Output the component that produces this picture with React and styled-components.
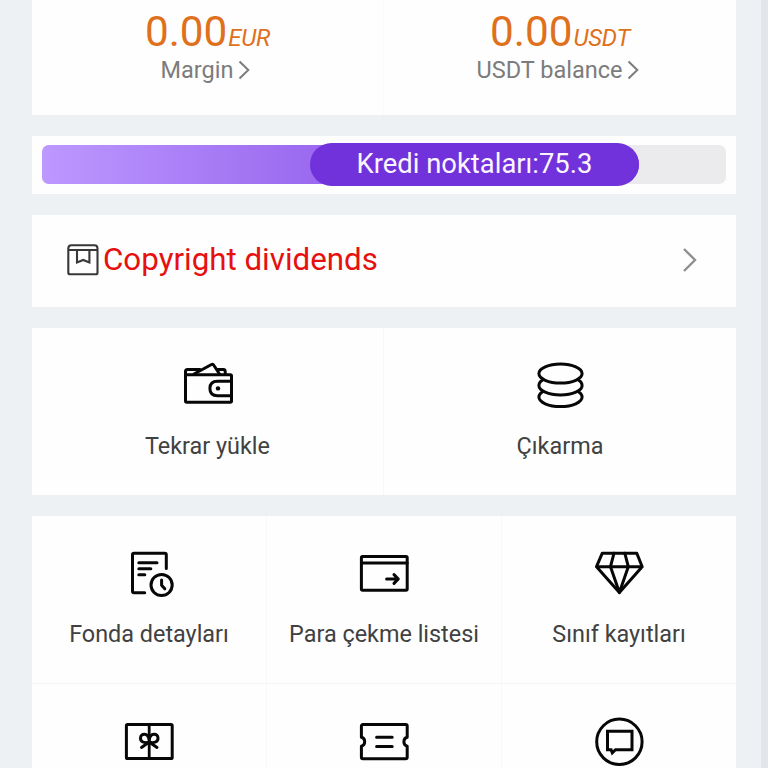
import React from "react";
import styled, { createGlobalStyle } from "styled-components";

const GlobalStyle = createGlobalStyle`
  *, *::before, *::after { box-sizing: border-box; }
  body {
    margin: 0;
    overflow: hidden;
    background: #edf1f4;
    font-family: Roboto, "Liberation Sans", sans-serif;
  }
`;

const Page = styled.main`
  display: flex;
  flex-direction: column;
  gap: 21px;
  height: 768px;
  padding: 0 25px 0 32px;
  overflow: hidden;
  background: #edf1f4;
  border-right: 7px solid #e3e5ea;
`;

const Card = styled.section`
  flex: none;
  background: #fefefe;
`;

const Balances = styled(Card)`
  display: grid;
  grid-template-columns: 351px 353px;
  height: 115px;
`;

const Balance = styled.div`
  display: flex;
  flex-direction: column;
  align-items: center;
  padding-top: 7px;
  & + & { border-left: 1px solid #fafafb; }
`;

const Amount = styled.div`
  height: 49px;
  line-height: 50px;
  font-size: 42.3px;
  color: #df701c;
  white-space: nowrap;
`;

const Currency = styled.em`
  margin-left: 1px;
  font-size: 24px;
  letter-spacing: -0.3px;
`;

const BalanceLink = styled.a`
  display: flex;
  align-items: center;
  gap: 5px;
  height: 28px;
  padding-right: 4px;
  font-size: 23.5px;
  line-height: 28px;
  color: #7c7c7c;
  white-space: nowrap;
`;

const CreditCard = styled(Card)`
  height: 58px;
  padding: 9px 10px 10px;
`;

const Track = styled.div`
  display: flex;
  align-items: center;
  height: 39px;
  border-radius: 7px;
  background: #ebebed;
`;

const Fill = styled.div`
  display: flex;
  align-items: center;
  justify-content: flex-end;
  width: 597px;
  height: 39px;
  border-radius: 7px 20px 20px 7px;
  background: linear-gradient(90deg, #bd98ff, #7232dd);
`;

const Pill = styled.div`
  flex: none;
  width: 329px;
  height: 43px;
  border-radius: 22px;
  background: #7132dc;
  color: #fbf5ff;
  font-size: 27.4px;
  line-height: 43px;
  text-align: center;
  white-space: nowrap;
`;

const DividendRow = styled(Card)`
  display: flex;
  align-items: center;
  gap: 4px;
  height: 92px;
  padding: 0 39px 2px 35px;
`;

const DividendTitle = styled.span`
  flex: 1;
  font-size: 31.3px;
  line-height: 40px;
  color: #e6100f;
`;

const MenuGrid = styled(Card)`
  display: grid;
  grid-template-columns: ${(p) => p.$columns};
  grid-auto-rows: ${(p) => p.$rowHeight}px;
`;

const MenuItem = styled.div`
  display: flex;
  flex-direction: column;
  align-items: center;
  padding-top: 33px;
  border-left: ${(p) => (p.$first ? "0" : "1px solid #f8f8f9")};
  border-bottom: ${(p) => (p.$ruled ? "1px solid #f4f4f5" : "0")};
`;

const MenuLabel = styled.span`
  margin-top: 21px;
  font-size: 23.4px;
  line-height: 28px;
  color: #414141;
  white-space: nowrap;
`;

const Icon = styled.svg`
  display: block;
  flex: none;
  width: 50px;
  height: 50px;
  fill: none;
  stroke: #070707;
  stroke-width: 3;
  stroke-linecap: round;
  stroke-linejoin: round;
`;

const Chevron = styled.svg`
  display: block;
  flex: none;
  fill: none;
  stroke: ${(p) => p.$color};
  stroke-width: ${(p) => p.$weight};
`;

const BookIcon = styled.svg`
  display: block;
  flex: none;
  width: 32px;
  height: 32px;
  fill: none;
  stroke: #383838;
  stroke-width: 2.1;
`;

const WalletIcon = () => (
  <Icon viewBox="0 0 50 50">
    <path d="M2.5 14V10.5Q2.5 8.5 4.5 8.5H17M35 8.5H40.5Q42.2 8.5 42.2 10.5V13" />
    <path d="M11 13L28.5 3.5Q30 2.8 30.8 4.2L36.5 13" />
    <rect x="2.5" y="13.7" width="46" height="27.6" rx="1.2" />
    <path d="M48 20.3H34.5Q26.9 20.3 26.9 27.5T34.5 34.7H48" />
    <circle cx="35" cy="27.4" r="2.2" fill="#070707" stroke="none" />
  </Icon>
);

const CoinsIcon = () => (
  <Icon viewBox="0 0 50 50">
    <g fill="#fefefe">
      <ellipse cx="25.5" cy="36.1" rx="21.6" ry="9.5" />
      <ellipse cx="25.5" cy="24.4" rx="21.6" ry="9.5" />
      <ellipse cx="25.5" cy="12.6" rx="21.6" ry="9.5" />
    </g>
  </Icon>
);

const StatementIcon = () => (
  <Icon viewBox="0 0 50 50">
    <path d="M42.3 19.5V5.8Q42.3 4.3 40.8 4.3H10Q8.5 4.3 8.5 5.8V42Q8.5 43.8 10 43.8H20.7" />
    <path d="M14.8 13.7H33M14.8 19.8H26.8M14.8 25.7H20.8" />
    <circle cx="37.6" cy="36" r="10.6" />
    <path d="M37.6 31V36.2L40.8 39.8" />
  </Icon>
);

const CardArrowIcon = () => (
  <Icon viewBox="0 0 50 50">
    <rect x="2.4" y="7.4" width="45.8" height="33.8" rx="1.2" />
    <path d="M2.4 14H48.2M27.6 30H39M35 25.6L39.3 30L35 34.4" />
  </Icon>
);

const DiamondIcon = () => (
  <Icon viewBox="0 0 50 50">
    <path d="M8.3 4.2H42.8L48.2 17.7L25.4 43.6L2.5 17.7ZM2.5 17.7H48.2" />
    <path d="M20 4.2L16.5 17.7L25.4 43.6L34.3 17.7L30.8 4.2" />
  </Icon>
);

const GiftIcon = () => (
  <Icon viewBox="0 0 50 50">
    <rect x="2.4" y="7.6" width="45.8" height="34" rx="1.2" />
    <path d="M25.2 8V41" strokeWidth="2.8" />
    <path d="M25.2 25C20 26.8 16.5 24.5 16.5 21.2C16.5 16 24.2 15.5 25.2 23C26.2 15.5 34 16 34 21.2C34 24.5 30.5 26.8 25.2 25L17.5 30.5M25.2 25L33 30.5" />
  </Icon>
);

const TicketIcon = () => (
  <Icon viewBox="0 0 50 50">
    <path d="M3.9 7.6H46.7Q48.2 7.6 48.2 9.1V20.3C43.8 21.5 43.8 28 48.2 29.2V40.2Q48.2 41.7 46.7 41.7H3.9Q2.4 41.7 2.4 40.2V29.2C6.8 28 6.8 21.5 2.4 20.3V9.1Q2.4 7.6 3.9 7.6Z" />
    <path d="M17.6 20.3H33.2M17.6 29.5H33.2" />
  </Icon>
);

const ChatIcon = () => (
  <Icon viewBox="0 0 50 50">
    <circle cx="25.4" cy="24.8" r="22.7" />
    <path d="M13.5 14.3H38V32.7H21.5L18.3 35.8L17.1 32.7H13.5Z" strokeLinejoin="miter" />
  </Icon>
);

const primaryActions = [
  { label: "Tekrar yükle", Glyph: WalletIcon },
  { label: "Çıkarma", Glyph: CoinsIcon },
];

const services = [
  { label: "Fonda detayları", Glyph: StatementIcon },
  { label: "Para çekme listesi", Glyph: CardArrowIcon },
  { label: "Sınıf kayıtları", Glyph: DiamondIcon },
  { Glyph: GiftIcon },
  { Glyph: TicketIcon },
  { Glyph: ChatIcon },
];

const balances = [
  { amount: "0.00", currency: "EUR", label: "Margin" },
  { amount: "0.00", currency: "USDT", label: "USDT balance" },
];

export default function App() {
  return (
    <>
      <GlobalStyle />
      <Page>
        <Balances>
          {balances.map((b) => (
            <Balance key={b.currency}>
              <Amount>
                {b.amount}
                <Currency>{b.currency}</Currency>
              </Amount>
              <BalanceLink>
                {b.label}
                <Chevron width="12" height="20" viewBox="0 0 12 20" $color="#7c7c7c" $weight={2}>
                  <path d="M1.5 1.5L10.3 10L1.5 18.5" />
                </Chevron>
              </BalanceLink>
            </Balance>
          ))}
        </Balances>

        <CreditCard>
          <Track>
            <Fill>
              <Pill>Kredi noktaları:75.3</Pill>
            </Fill>
          </Track>
        </CreditCard>

        <DividendRow>
          <BookIcon viewBox="0 0 32 32">
            <path d="M1.3 7V4.5Q1.3 1.3 4.5 1.3H27.5Q30.5 1.3 30.5 4.5V28.5Q30.5 30.3 28.7 30.3H3.1Q1.3 30.3 1.3 28.5V7ZM1.3 6H30.5" />
            <path d="M10 6V18.5L16.2 16L22.4 18.5V6" />
          </BookIcon>
          <DividendTitle>Copyright dividends</DividendTitle>
          <Chevron width="15" height="26" viewBox="0 0 15 26" $color="#8f8f8f" $weight={2.4}>
            <path d="M2 2L13 13L2 24" />
          </Chevron>
        </DividendRow>

        <MenuGrid $columns="351px 353px" $rowHeight={167}>
          {primaryActions.map(({ label, Glyph }, i) => (
            <MenuItem key={label} $first={i === 0}>
              <Glyph />
              <MenuLabel>{label}</MenuLabel>
            </MenuItem>
          ))}
        </MenuGrid>

        <MenuGrid $columns="234px 235px 235px" $rowHeight={168}>
          {services.map(({ label, Glyph }, i) => (
            <MenuItem key={i} $first={i % 3 === 0} $ruled={i < 3}>
              <Glyph />
              {label && <MenuLabel>{label}</MenuLabel>}
            </MenuItem>
          ))}
        </MenuGrid>
      </Page>
    </>
  );
}
